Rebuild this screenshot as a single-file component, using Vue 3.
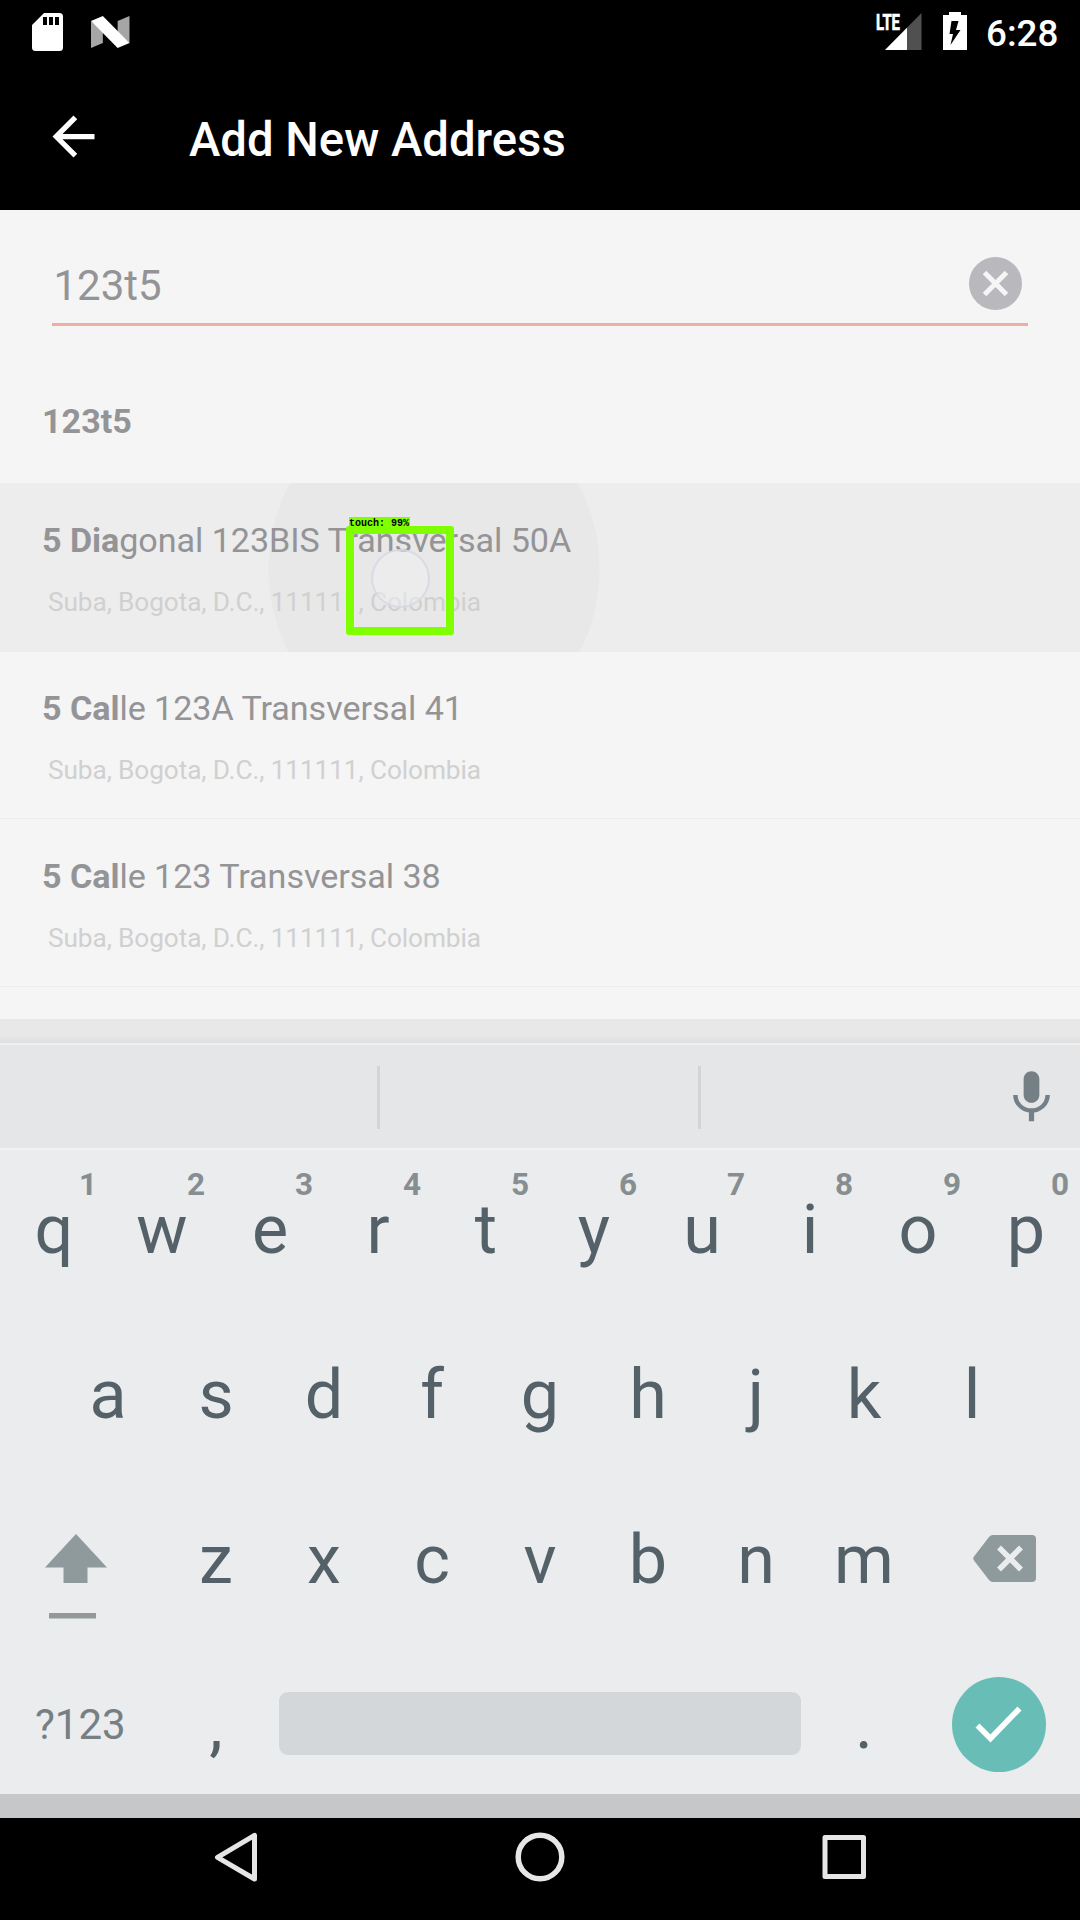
<script setup>
const query = '123t5'

const results = [
  { match: '5 Dia', rest: 'gonal 123BIS Transversal 50A', area: 'Suba, Bogota, D.C., 111111, Colombia', pressed: true },
  { match: '5 Cal', rest: 'le 123A Transversal 41', area: 'Suba, Bogota, D.C., 111111, Colombia', pressed: false },
  { match: '5 Cal', rest: 'le 123 Transversal 38', area: 'Suba, Bogota, D.C., 111111, Colombia', pressed: false },
]

const topKeys = [...'qwertyuiop'].map((letter, i) => ({ letter, hint: (i + 1) % 10 }))
const middleKeys = [...'asdfghjkl']
const bottomKeys = [...'zxcvbnm']
</script>

<template>
  <div class="screen">
    <header class="status-bar">
      <svg class="sd" width="31" height="38" viewBox="0 0 31 38">
        <path fill="#fff" d="M12 0H27.500a3.500 3.500 0 0 1 3.500 3.500V34.500a3.500 3.500 0 0 1-3.500 3.500H3.500a3.500 3.500 0 0 1-3.500-3.500V12z" />
        <path fill="#000" d="M11 4h4v8h-4zM17 4h4v8h-4zM23 4h4v8h-4z" />
      </svg>
      <svg class="nougat" width="38.500" height="32" viewBox="0 0 39 32" preserveAspectRatio="none">
        <path fill="#a6a6a6" d="M0 5L12 15V27L0 32zM27 5L39 0V27L27 17z" />
        <path fill="#fff" d="M0 5L12 0L39 27L27 32z" />
      </svg>
      <svg class="signal" width="46" height="38" viewBox="0 0 46 38">
        <path fill="#505050" d="M45.500 0V37H9z" />
        <path fill="#fff" d="M31 14.700V37H9z" />
        <path fill="#000" d="M0 0H25V18H0z" />
        <text x="0" y="16.500" fill="#fff" stroke="#fff" stroke-width=".700" font-size="22.500" font-weight="700" textLength="24" lengthAdjust="spacingAndGlyphs">LTE</text>
      </svg>
      <svg class="battery" width="24" height="38" viewBox="0 0 24 38">
        <path fill="#fff" d="M6 0H18V3H24V38H0V3H6z" />
        <path fill="#000" d="M8.500 9H15.500L13 18H17.500L7.500 33L10 22H6.500z" />
      </svg>
      <span class="clock">6:28</span>
    </header>

    <div class="app-bar">
      <svg class="back" width="63" height="63" viewBox="0 0 24 24">
        <path fill="#fff" d="M20 11H7.830l5.590-5.590L12 4l-8 8 8 8 1.410-1.410L7.830 13H20v-2z" />
      </svg>
      <h1>Add New Address</h1>
    </div>

    <main>
      <div class="field">
        <span class="value">{{ query }}</span>
        <svg class="clear" width="53" height="53" viewBox="0 0 53 53">
          <circle cx="26.500" cy="26.500" r="26.500" fill="#b9b9bd" />
          <path d="M15.500 15.500L37.500 37.500M37.500 15.500L15.500 37.500" stroke="#f5f5f5" stroke-width="5" />
        </svg>
      </div>

      <div class="typed">{{ query }}</div>

      <ul class="results">
        <li v-for="(r, i) in results" :key="i" :class="{ pressed: r.pressed }">
          <span v-if="r.pressed" class="ripple"></span>
          <p class="street"><b>{{ r.match }}</b>{{ r.rest }}</p>
          <p class="area">{{ r.area }}</p>
          <template v-if="r.pressed">
            <span class="touch-dot"></span>
            <span class="detection"></span>
            <span class="detection-label">touch: 99%</span>
          </template>
        </li>
      </ul>
    </main>

    <div class="shade"></div>

    <section class="keyboard">
      <div class="suggestions">
        <i></i><i></i>
        <svg class="mic" width="63" height="63" viewBox="0 0 24 24">
          <path fill="#757f86" d="M12 14c1.660 0 2.990-1.340 2.990-3L15 5c0-1.660-1.340-3-3-3S9 3.340 9 5v6c0 1.660 1.340 3 3 3zm5.300-3c0 3-2.540 5.100-5.300 5.100S6.700 14 6.700 11H5c0 3.410 2.720 6.230 6 6.720V21h2v-3.280c3.280-.480 6-3.300 6-6.720h-1.700z" />
        </svg>
      </div>

      <div class="row">
        <span v-for="k in topKeys" :key="k.letter" class="key">{{ k.letter }}<sup>{{ k.hint }}</sup></span>
      </div>
      <div class="row inset">
        <span v-for="k in middleKeys" :key="k" class="key">{{ k }}</span>
      </div>
      <div class="row">
        <span class="wide">
          <svg class="shift" width="62" height="85" viewBox="0 0 62 85">
            <path fill="#8f9a9c" d="M31 0L62 33.500H42.500V49H18.500V33.500H0z" />
            <path fill="#93999b" d="M4 79H51V84.500H4z" />
          </svg>
        </span>
        <span v-for="k in bottomKeys" :key="k" class="key">{{ k }}</span>
        <span class="wide">
          <svg class="erase" width="63" height="47" viewBox="0 0 63 47">
            <path fill="#8f9a9c" d="M20 0H59a4 4 0 0 1 4 4V43a4 4 0 0 1-4 4H20Q17.500 47 16 45L1 25.500Q-.500 23.500 1 21.500L16 2Q17.500 0 20 0z" />
            <path d="M26 12.500L48 34.500M48 12.500L26 34.500" stroke="#eaecee" stroke-width="5.500" />
          </svg>
        </span>
      </div>
      <div class="row last">
        <span class="wide symbols">?123</span>
        <span class="key">,</span>
        <span class="space"></span>
        <span class="key">.</span>
        <svg class="done" width="94" height="95" viewBox="0 0 94 95">
          <ellipse cx="47" cy="47.500" rx="47" ry="47.500" fill="#68beb7" />
          <path d="M25.500 48.500L38.500 61.500L67.500 31.500" fill="none" stroke="#fff" stroke-width="5.600" />
        </svg>
      </div>
    </section>

    <div class="gap"></div>

    <nav>
      <svg width="1080" height="102" viewBox="0 1818 1080 102" fill="none" stroke="#e6e6e6" stroke-width="5" stroke-linejoin="round">
        <path d="M217.500 1857.300L254.500 1835.300V1879z" />
        <circle cx="540" cy="1857" r="21.800" stroke-width="5.500" />
        <path d="M825 1837.500H863.500V1876.500H825z" />
      </svg>
    </nav>
  </div>
</template>

<style>
body {
  margin: 0;
}
</style>

<style scoped>
.screen {
  width: 1080px;
  height: 1920px;
  overflow: hidden;
  display: flex;
  flex-direction: column;
  background: #000;
  font-family: Roboto, "Liberation Sans", sans-serif;
}
svg {
  display: block;
  flex: none;
  overflow: visible;
}
.status-bar {
  height: 63px;
  display: flex;
  align-items: flex-start;
  padding: 0 22px 0 32px;
  box-sizing: border-box;
}
.sd {
  margin-top: 12.5px;
}
.nougat {
  margin: 16px 0 0 28px;
}
.signal {
  margin: 13px 0 0 auto;
}
.battery {
  margin: 12px 0 0 21.5px;
}
.clock {
  width: 91px;
  box-sizing: border-box;
  padding-left: 19px;
  font-size: 36.75px;
  font-weight: 500;
  line-height: 67px;
  color: #fff;
}
.app-bar {
  height: 147px;
  display: flex;
  align-items: center;
  padding-left: 42px;
}
h1 {
  margin: 6px 0 0 84px;
  font-size: 47.25px;
  font-weight: 500;
  line-height: 60px;
  color: #fff;
}
main {
  height: 809px;
  background: #f5f5f5;
  overflow: hidden;
}
.field {
  height: 113px;
  margin: 0 52.5px 0 52px;
  padding: 0 5.5px 0 1.5px;
  display: flex;
  align-items: flex-start;
  justify-content: space-between;
  border-bottom: 3px solid #f0aca0;
}
.value {
  padding-top: 46px;
  font-size: 42px;
  line-height: 60px;
  color: #949497;
}
.clear {
  margin-top: 47px;
}
.typed {
  height: 82px;
  padding: 75px 0 0 42px;
  font-size: 34.125px;
  font-weight: 700;
  line-height: 40px;
  color: #949497;
}
.results {
  list-style: none;
  margin: 0;
  padding: 0;
}
li {
  position: relative;
  height: 168px;
  box-sizing: border-box;
  padding: 37px 0 0 42px;
  border-bottom: 1px solid #ededee;
}
.pressed {
  background: #ededed;
  box-shadow: 0 1px #ededed;
  z-index: 1;
}
.street,
.area {
  position: relative;
  margin: 0;
  white-space: nowrap;
}
.street {
  font-size: 34.125px;
  line-height: 40px;
  letter-spacing: -0.05px;
  color: #949497;
}
.area {
  margin: 27px 0 0 6px;
  font-size: 26.25px;
  line-height: 30px;
  letter-spacing: -0.11px;
  color: #d0d0d1;
}
.ripple {
  position: absolute;
  inset: 0 0 -2px;
  background: radial-gradient(ellipse 166px 175px at 434px 86px, #e8e8e8 99.4%, transparent 100%);
}
.touch-dot {
  position: absolute;
  left: 371px;
  top: 66px;
  width: 59px;
  height: 59px;
  box-sizing: border-box;
  border: 2px solid rgba(214, 214, 228, 0.8);
  border-radius: 50%;
  background: rgba(240, 240, 240, 0.5);
}
.detection {
  position: absolute;
  left: 346px;
  top: 43px;
  width: 108px;
  height: 109px;
  box-sizing: border-box;
  border: 8px solid #7fff00;
  border-radius: 3px;
}
.detection-label {
  position: absolute;
  left: 349px;
  top: 34px;
  width: 61px;
  height: 12px;
  background: #7fff00;
  color: #000;
  font: 700 10px/14px "Liberation Mono", monospace;
  white-space: nowrap;
}
.shade {
  height: 24px;
  background: linear-gradient(#e8e8e8 70%, #dfdfdf);
}
.keyboard {
  height: 751px;
  background: #eaecee;
}
.suggestions {
  height: 107px;
  box-sizing: border-box;
  border-top: 2px solid #eff0f1;
  border-bottom: 2px solid #f1f2f3;
  background: #e5e6e8;
  display: flex;
  align-items: flex-start;
  padding-left: 377px;
}
.suggestions i {
  width: 3px;
  height: 63px;
  margin: 21px 318px 0 0;
  background: #d2d4d7;
}
.suggestions i + i {
  margin-right: 299px;
}
.mic {
  margin-top: 21px;
}
.row {
  height: 165px;
  display: flex;
  align-items: flex-start;
}
.inset {
  padding: 0 54px;
}
.last {
  height: 149px;
}
.key {
  position: relative;
  width: 108px;
  text-align: center;
  font-size: 68.25px;
  line-height: 161px;
  color: #556168;
}
sup {
  position: absolute;
  right: 11px;
  top: 15px;
  font-size: 31.5px;
  font-weight: 700;
  line-height: 40px;
  color: #868e92;
}
.wide {
  width: 162px;
}
.shift {
  margin: 54px 0 0 44.5px;
}
.erase {
  margin: 55px 0 0 55px;
}
.symbols {
  box-sizing: border-box;
  padding-left: 35px;
  font-size: 42px;
  line-height: 159px;
  color: #757f84;
}
.last .key {
  line-height: 160px;
}
.space {
  width: 522px;
  height: 63px;
  margin: 47px 9px 0;
  border-radius: 9px;
  background: #d4d7da;
}
.done {
  margin: 31.5px 0 0 34px;
}
.gap {
  height: 24px;
  background: #c5c7c9;
}
nav {
  height: 102px;
}
</style>
